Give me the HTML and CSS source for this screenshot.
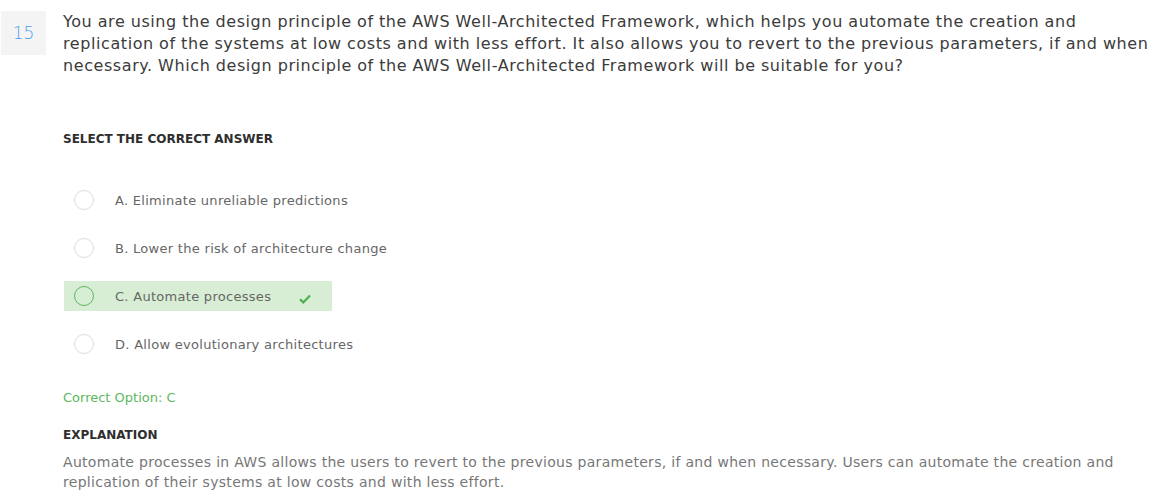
FILE: index.html
```html
<!DOCTYPE html>
<html>
<head>
<meta charset="utf-8">
<link rel="stylesheet" href="styles.css">
</head>
<body>
<div class="page">
  <div class="question">
    <div class="qnum">15</div>
    <p class="qtext">You are using the design principle of the AWS Well-Architected Framework, which helps you automate the creation and replication of the systems at low costs and with less effort. It also allows you to revert to the previous parameters, if and when necessary. Which design principle of the AWS Well-Architected Framework will be suitable for you?</p>
  </div>
  <div class="body">
    <h3 class="label">SELECT THE CORRECT ANSWER</h3>
    <ul class="options">
      <li class="option"><span class="radio"></span><span class="otext">A. Eliminate unreliable predictions</span></li>
      <li class="option"><span class="radio"></span><span class="otext">B. Lower the risk of architecture change</span></li>
      <li class="option correct"><span class="radio"></span><span class="otext">C. Automate processes</span>
        <svg class="check" width="12" height="10" viewBox="0 0 12 10"><path d="M1 5.2 L4.3 8.4 L11 1.6" fill="none" stroke="#4cae4c" stroke-width="2.2"/></svg>
      </li>
      <li class="option"><span class="radio"></span><span class="otext">D. Allow evolutionary architectures</span></li>
    </ul>
    <p class="answer">Correct Option: C</p>
    <h3 class="label expl">EXPLANATION</h3>
    <p class="explain">Automate processes in AWS allows the users to revert to the previous parameters, if and when necessary. Users can automate the creation and replication of their systems at low costs and with less effort.</p>
  </div>
</div>
</body>
</html>
```

FILE: styles.css
```css
* { box-sizing: border-box; }
html, body { margin: 0; padding: 0; background: #fff; }
body { font-family: "DejaVu Sans", sans-serif; color: #3d3d3d; overflow-x: hidden; }
.page { padding-top: 11px; }
.question { display: flex; align-items: flex-start; }
.qnum {
  margin-left: 1px;
  width: 45px; height: 44px;
  background: #f4f4f4;
  color: #4a9cf6;
  font-size: 17px;
  font-weight: 300;
  display: flex; align-items: center; justify-content: center;
  flex: none;
}
.qtext {
  margin: 0 -8px 0 17px;
  font-size: 16px;
  line-height: 22px;
  letter-spacing: 0.58px;
  word-spacing: -0.3px;
  color: #3b3b3b;
  padding-right: 0;
  flex: 1;
}
.body { padding-left: 63px; }
.label {
  margin: 0;
  font-size: 12px;
  font-weight: bold;
  color: #2e2e2e;
  line-height: 16px;
}
.body > .label:first-child { margin-top: 54px; }
.options { list-style: none; margin: 38px 0 0 0; padding: 0; }
.option {
  display: flex; align-items: center;
  height: 30px;
  margin-left: 1px;
  padding-left: 10px;
  margin-bottom: 18px;
  width: fit-content;
  padding-right: 21px;
}
.radio {
  width: 20px; height: 20px;
  border-radius: 50%;
  border: 1px solid #dcdcdc;
  background: #fff;
  flex: none;
}
.otext { margin-left: 21px; font-size: 13px; letter-spacing: 0.29px; color: #666; }
.correct { background: #d8eed4; }
.correct .radio { border-color: #5cb85c; background: transparent; }
.check { margin-left: 28px; margin-top: 6px; }
.answer { margin: 31px 0 0 0; font-size: 13px; color: #5cb85c; line-height: 16px; }
.expl { margin-top: 21px; }
.explain { margin: 9px 0 0 0; font-size: 14px; line-height: 20px; letter-spacing: 0.3px; color: #777; padding-right: 20px; }
```
